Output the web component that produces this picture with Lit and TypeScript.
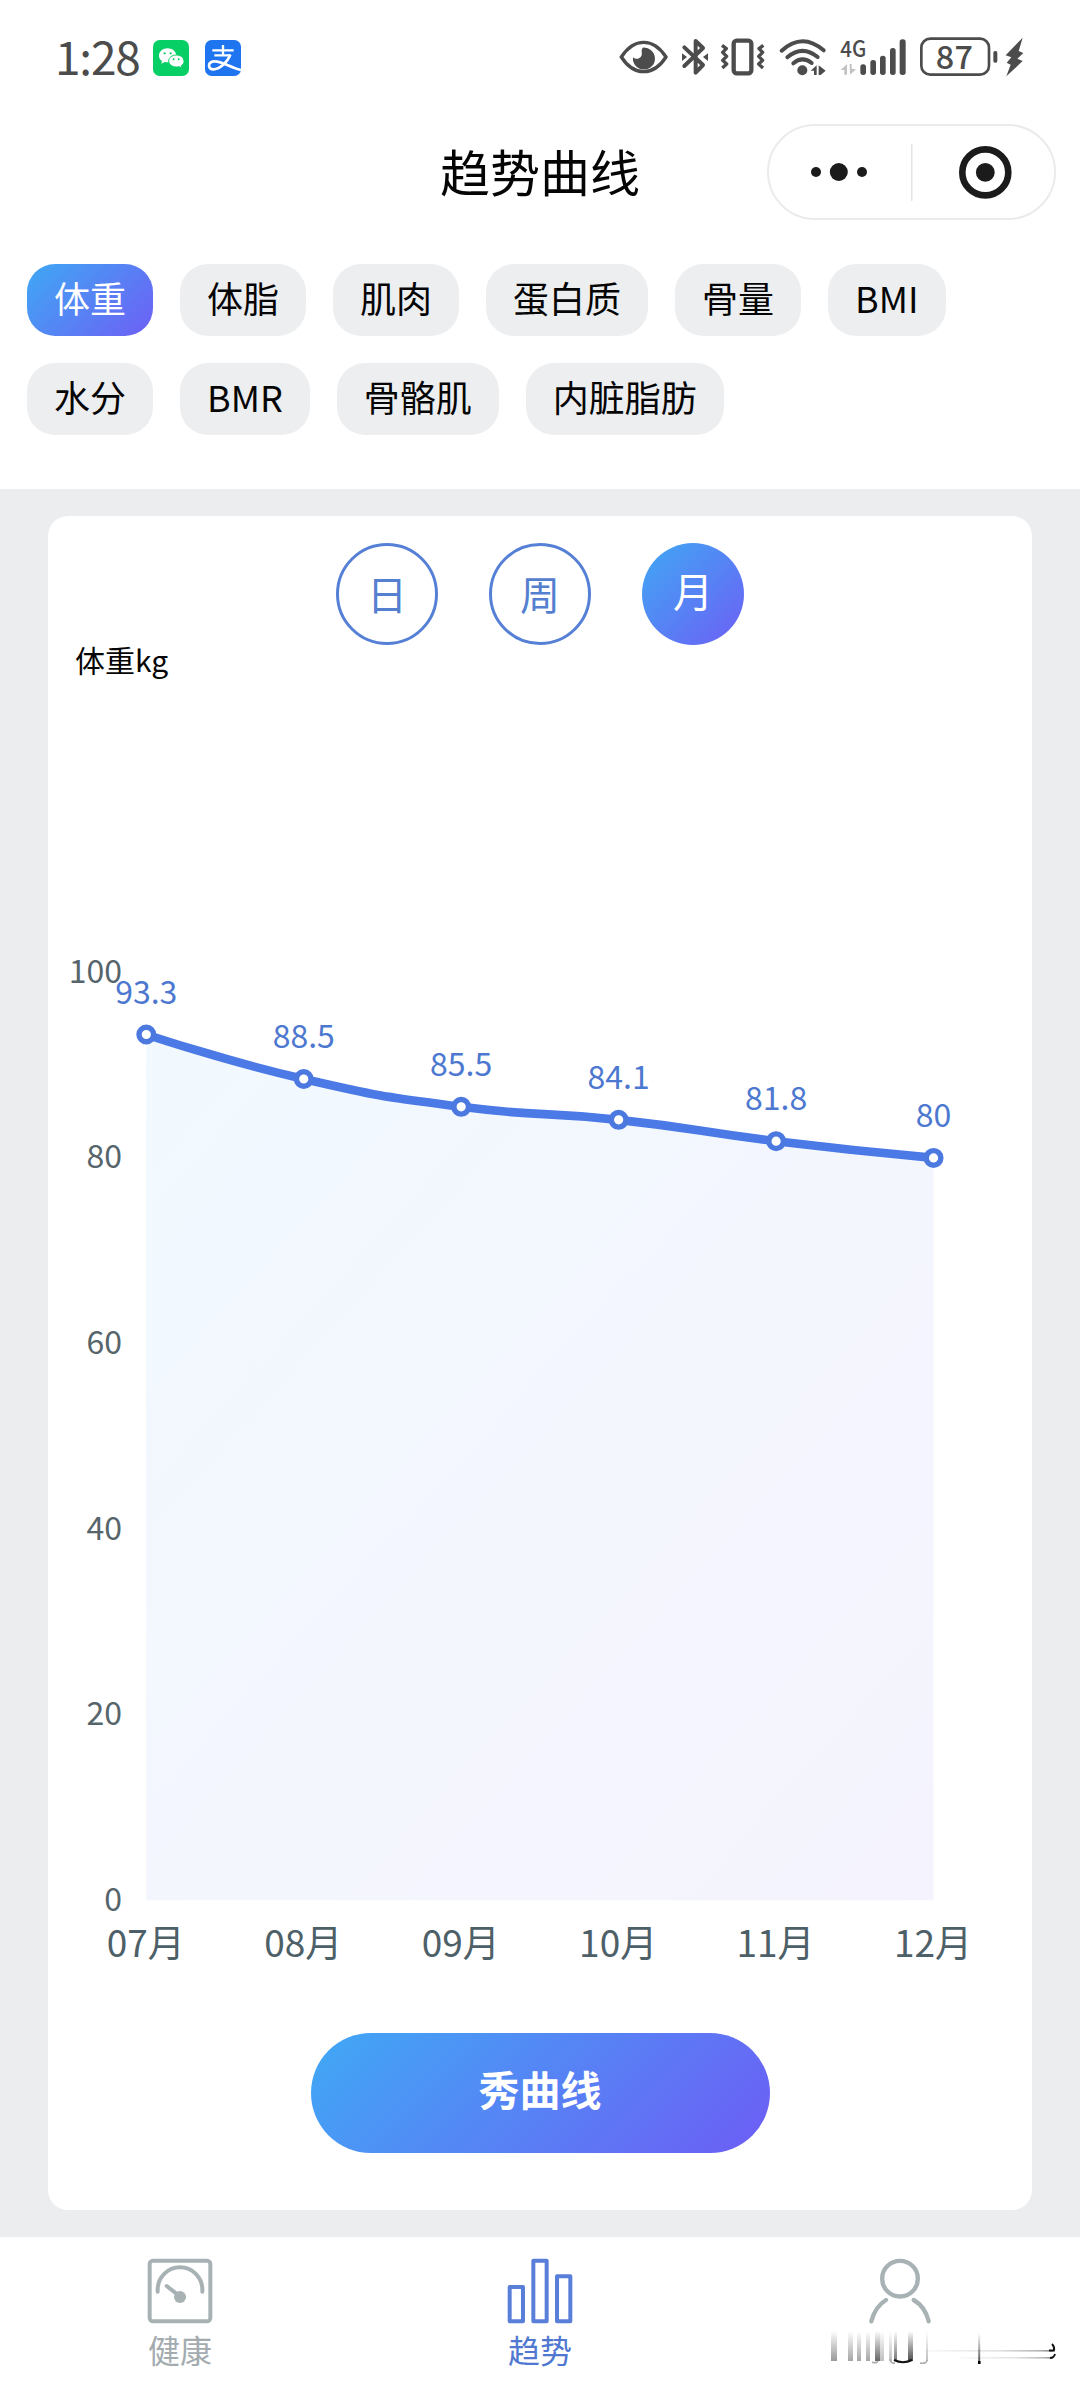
import { LitElement, html, svg, css } from "lit";
import { customElement, property } from "lit/decorators.js";

const FONT = css`"Noto Sans CJK SC", "Noto Sans", sans-serif`;

@customElement("status-bar")
class StatusBar extends LitElement {
  static styles = css`
    :host { display: flex; height: 100px; align-items: flex-start; font-family: ${FONT}; }
    .time { margin: 17px 0 0 55px; width: 98px; font-size: 46px; line-height: 76px; font-weight: 400; color: #4c4c4c; letter-spacing: -1.2px; white-space: nowrap; }
    .app { margin: 40px 16px 0 0; width: 36px; height: 36px; flex: none; }
    .right { margin: 20px 40px 0 auto; }
  `;
  render() {
    return html`
      <div class="time">1:28</div>
      <svg class="app" viewBox="0 0 108 108">
        <rect width="108" height="108" rx="20" fill="#07cf65" />
        <path d="M44 25C29 25 18 35 18 47c0 7 3 12 9 16l-2 8 10-5c3 1 6 1 9 1 14 0 26-9 26-20S59 25 44 25Z" fill="#fff" />
        <path d="M70 45c13 0 23 8 23 19 0 6-3 10-8 13l1 7-8-4c-2 1-5 1-8 1-13 0-23-8-23-18s10-18 23-18Z" fill="#fff" stroke="#07cf65" stroke-width="3" />
        <g fill="#07cf65"><circle cx="35" cy="40" r="3.4" /><circle cx="53" cy="40" r="3.4" /><circle cx="62" cy="58" r="3" /><circle cx="77" cy="58" r="3" /></g>
      </svg>
      <svg class="app" viewBox="0 0 108 108">
        <rect width="108" height="108" rx="20" fill="#1f74f0" />
        <g fill="none" stroke="#fff">
          <path d="M22 31H86M54 15V46M28 46H77" stroke-width="7" />
          <path d="M76 44C68 66 44 88 25 88C8 88 7 66 27 64C50 62 74 82 108 90" stroke-width="8" />
        </g>
      </svg>
      <svg class="right" width="440" height="80" viewBox="0 0 1320 240" fill="#4c4c4c" stroke="none">
        <path d="M64 111C84 80 106 67 131 67S178 80 198 111C178 142 156 155 131 155S84 142 64 111Z" fill="none" stroke="#4c4c4c" stroke-width="10" />
        <path d="M128 83A33 33 0 1 1 99 112Q108 120 118 114Q128 108 125 96Q124 88 128 83Z" />
        <g fill="none" stroke="#4c4c4c" stroke-width="12" stroke-linejoin="round" stroke-linecap="round">
          <path d="M253 82L309 135L287 158V63L309 84L253 138" />
        </g>
        <path d="M246 100L261 111L246 123ZM324 100L309 111L324 123Z" />
        <rect x="401" y="62" width="53" height="98" rx="9" fill="none" stroke="#4c4c4c" stroke-width="13" />
        <path d="M366 76L379 86L368 97L380 109L368 121L380 132L367 144M490 76L477 86L488 97L476 109L488 121L476 132L489 144" fill="none" stroke="#4c4c4c" stroke-width="10" stroke-linejoin="round" />
        <g fill="none" stroke="#4c4c4c" stroke-width="12" stroke-linecap="round">
          <path d="M545 92Q607 36 671 91" /><path d="M562 112Q607 74 653 111" /><path d="M580 130Q607 107 635 129" />
        </g>
        <circle cx="607" cy="151" r="15" />
        <path d="M632 152L650 136V165H642V152ZM656 136L677 152L662 165H656Z" />
        <text x="721" y="110" font-size="68" font-weight="500" textLength="78" lengthAdjust="spacingAndGlyphs">4G</text>
        <path d="M722 150L741 132V164H733V150ZM749 132H755V146L768 148L750 164Z" fill="#c2c2c2" />
        <rect x="781" y="133" width="17" height="32" rx="8" /><rect x="811" y="120" width="17" height="45" rx="8" />
        <rect x="840" y="107" width="17" height="58" rx="8" /><rect x="870" y="84" width="17" height="81" rx="8" />
        <rect x="899" y="58" width="18" height="107" rx="8" />
        <rect x="964" y="56" width="203" height="108" rx="27" fill="none" stroke="#4c4c4c" stroke-width="8" />
        <text x="1007" y="146" font-size="97" font-weight="500" textLength="112">87</text>
        <rect x="1180" y="93" width="12" height="35" rx="5" />
        <path d="M1268 53L1217 106L1234 112L1220 128L1232 134L1219 169L1268 123L1252 116L1270 99L1256 93Z" />
      </svg>`;
  }
}

@customElement("title-bar")
class TitleBar extends LitElement {
  static styles = css`
    :host { display: grid; grid-template-columns: 1fr auto 1fr; height: 164px; align-items: start; font-family: ${FONT}; }
    .title { grid-column: 2; margin-top: 34px; font-size: 50px; line-height: 72px; color: #050505; }
    .capsule { justify-self: end; box-sizing: border-box; width: 289px; height: 96px; margin: 24px 24px 0 0; border: 2px solid #ebebeb; border-radius: 48px; display: flex; }
  `;
  render() {
    return html`
      <div class="title">趋势曲线</div>
      <div class="capsule">
        <svg width="285" height="92" viewBox="769 126 285 92" fill="#1b1b1b">
          <circle cx="816" cy="172" r="5" /><circle cx="838.8" cy="172" r="9" /><circle cx="862" cy="172" r="5" />
          <rect x="911" y="144" width="1.5" height="57" fill="#e4e4e4" />
          <circle cx="985.3" cy="172.4" r="23" fill="none" stroke="#1b1b1b" stroke-width="6.6" /><circle cx="985.3" cy="172.4" r="9.4" />
        </svg>
      </div>`;
  }
}

@customElement("metric-chips")
class MetricChips extends LitElement {
  static styles = css`
    :host { display: flex; flex-direction: column; gap: 27px; padding: 0 27px 54px; font-family: ${FONT}; }
    .row { display: flex; gap: 27px; }
    .chip { height: 72px; line-height: 66px; padding: 0 27px; border-radius: 28px; background: #edeef0; color: #050505; font-size: 36px; white-space: nowrap; }
    .active { color: #fff; background: linear-gradient(135deg, #3fa8f4, #6d5ff5); }
  `;
  rows = [["体重", "体脂", "肌肉", "蛋白质", "骨量", "BMI"], ["水分", "BMR", "骨骼肌", "内脏脂肪"]];
  render() {
    return this.rows.map((row) => html`<div class="row">${row.map((name) => html`
      <div class="chip ${name === "体重" ? "active" : ""}">${name}</div>`)}</div>`);
  }
}

type Point = { month: string; value: number };

@customElement("trend-chart")
class TrendChart extends LitElement {
  static styles = css`
    :host { display: block; font-family: ${FONT}; }
    svg { display: block; }
    .axis { fill: #56656b; font-size: 32px; text-anchor: end; }
    .month { fill: #4d6068; font-size: 37px; text-anchor: middle; }
    .value { fill: #4d78d0; font-size: 32px; text-anchor: middle; }
    .line { fill: none; stroke: #4b79e6; stroke-width: 8.6; }
    .dot { fill: #fff; stroke: #4b79e0; stroke-width: 5.4; }
  `;
  data: Point[] = [
    { month: "07月", value: 93.3 }, { month: "08月", value: 88.5 }, { month: "09月", value: 85.5 },
    { month: "10月", value: 84.1 }, { month: "11月", value: 81.8 }, { month: "12月", value: 80 },
  ];
  // Plot area in page units; the viewBox starts at the card's left edge.
  x = (i: number) => 146.3 + i * 157.45;
  y = (v: number) => 1900.3 - v * 9.28;

  curve() {
    const p = this.data.map((d, i) => [this.x(i), this.y(d.value)]);
    const slope = (i: number) => (p[i + 1][1] - p[i - 1][1]) / (p[i + 1][0] - p[i - 1][0]);
    let d = `M${p[0]}`;
    for (let i = 1; i < p.length; i++) {
      const [x0, y0] = p[i - 1];
      const [x1, y1] = p[i];
      const h = (x1 - x0) / 2;
      const a = i === 1 ? [x0, y0] : [x0 + h, Math.min(y0 + slope(i - 1) * h, y1)];
      const b = i === p.length - 1 ? [x1, y1] : [x1 - h, Math.max(y1 - slope(i) * h, y0)];
      d += `C${a} ${b} ${x1},${y1}`;
    }
    return d;
  }
  render() {
    const line = this.curve();
    return html`<svg width="984" height="1300" viewBox="48 690 984 1300">
      <defs><linearGradient id="area" x1="0" y1="0" x2="1" y2="1">
        <stop offset="0" stop-color="#f1f9ff" /><stop offset="0.55" stop-color="#f4f6fe" /><stop offset="1" stop-color="#f5f4fe" />
      </linearGradient></defs>
      <path d="${line}V1900.3H146.3Z" fill="url(#area)" />
      ${[0, 20, 40, 60, 80, 100].map((v) => svg`<text class="axis" x="122" y=${this.y(v) + 10.5}>${v}</text>`)}
      <path class="line" d=${line} />
      ${this.data.map((d, i) => svg`
        <circle class="dot" cx=${this.x(i)} cy=${this.y(d.value)} r="7.3" />
        <text class="value" x=${this.x(i)} y=${this.y(d.value) - 30.8}>${d.value}</text>
        <text class="month" x=${this.x(i) - 0.5} y="1957">${d.month}</text>`)}
    </svg>`;
  }
}

@customElement("tab-bar")
class TabBar extends LitElement {
  static styles = css`
    :host { display: grid; grid-template-columns: repeat(3, 1fr); height: 151px; background: #fff; font-family: ${FONT}; position: relative; }
    .tab { display: flex; flex-direction: column; align-items: center; padding-top: 21px; color: #a4abaf; }
    .on { color: #5078d0; }
    .label { font-size: 32px; line-height: 44px; margin-top: 3px; }
    .smear { position: absolute; left: 820px; top: 88px; }
  `;
  // x, width and opacity of each vertical streak.
  bars = [
    [831, 6, 0.4], [848, 5, 0.35], [857, 4, 0.35], [866, 4, 0.35], [875, 5, 0.6], [880, 4, 0.25],
    [889, 3, 0.25], [894, 3, 0.55], [908, 5, 0.7], [926, 2, 0.25],
  ];
  render() {
    return html`
      <div class="tab">
        <svg width="66" height="66" viewBox="-1 -1 198 198" fill="none" stroke="#a8b2b5" stroke-width="12" stroke-linecap="round">
          <rect x="7" y="7" width="182" height="182" rx="10" /><path d="M31 100V94A67 67 0 0 1 165 94V100M58 83L91 109" />
          <circle cx="98" cy="116" r="18" fill="#a8b2b5" stroke="none" />
        </svg><span class="label">健康</span>
      </div>
      <div class="tab on">
        <svg width="66" height="66" viewBox="-1 -1 198 198" fill="none" stroke="#5a7fd8" stroke-width="12" stroke-linejoin="round">
          <rect x="7" y="86" width="40" height="103" /><rect x="78" y="7" width="40" height="182" /><rect x="149" y="54" width="40" height="135" />
        </svg><span class="label">趋势</span>
      </div>
      <div class="tab">
        <svg width="66" height="66" viewBox="265 114 198 198" fill="none" stroke="#a8b2b5" stroke-width="13" stroke-linecap="round">
          <circle cx="364" cy="176" r="53.5" /><path d="M278 304Q289 260 322 240M450 304Q440 260 405 240" />
        </svg>
      </div>
      <svg class="smear" width="240" height="50" viewBox="820 2325 240 50">
        <defs>
          <linearGradient id="v" x1="0" y1="0" x2="0" y2="1"><stop offset="0" stop-opacity="0" /><stop offset="1" /></linearGradient>
          <linearGradient id="h"><stop offset="0" stop-opacity="0.05" /><stop offset="0.6" stop-opacity="0.25" /><stop offset="0.9" stop-opacity="0.6" /><stop offset="1" /></linearGradient>
          <filter id="soft" x="-5%" width="110%"><feGaussianBlur stdDeviation="0.7 0.2" /></filter>
        </defs>
        <g filter="url(#soft)">${this.bars.map(([x, w, o]) => svg`<rect x=${x} y="2331" width=${w} height="30" fill="url(#v)" opacity=${o} />`)}</g>
        <path d="M894 2360Q903 2364.500 912 2360" fill="none" stroke="#111" stroke-width="2" />
        <path d="M872 2362Q876 2364 878 2361M890 2359Q891 2364 895 2363M920 2363Q927 2364 927 2360" fill="none" stroke="#aaa" stroke-width="1.6" />
        <rect x="978.200" y="2333" width="2" height="31" fill="url(#v)" opacity="0.7" /><rect x="978" y="2361" width="2.500" height="3" />
        <rect x="925" y="2350" width="128" height="1.6" fill="url(#h)" opacity="0.5" /><rect x="960" y="2357" width="92" height="1.6" fill="url(#h)" opacity="0.45" />
        <path d="M1052 2344Q1055 2347 1054 2350.500H1049M1050 2358Q1054 2358 1055 2354" fill="none" stroke="#111" stroke-width="1.8" />
      </svg>`;
  }
}

@customElement("app-root")
class AppRoot extends LitElement {
  static styles = css`
    :host { display: flex; flex-direction: column; width: 1080px; height: 2388px; overflow: hidden; background: #fff; font-family: ${FONT}; }
    .body { flex: 1; min-height: 0; box-sizing: border-box; padding: 27px 48px; background: #ebedef; display: flex; }
    .card { flex: 1; background: #fff; border-radius: 20px; display: flex; flex-direction: column; align-items: center; }
    .periods { display: flex; gap: 51px; margin-top: 27px; }
    .period { box-sizing: border-box; width: 102px; height: 102px; border: 3px solid #5680d6; border-radius: 50%; text-align: center; font-size: 40px; line-height: 94px; color: #5580d0; }
    .active { border: 0; color: #fff; background: linear-gradient(135deg, #3fa8f4, #6d5ff5); line-height: 94px; }
    .unit { align-self: flex-start; margin-left: 27px; height: 45px; line-height: 29px; font-size: 30px; color: #050505; }
    .show { width: 459px; height: 120px; margin-top: 43px; border-radius: 60px; background: linear-gradient(135deg, #40a9f5, #6d5df5); color: #fff; font-size: 41px; font-weight: 700; line-height: 111px; text-align: center; }
  `;
  @property() period = "月";
  render() {
    return html`
      <status-bar></status-bar>
      <title-bar></title-bar>
      <metric-chips></metric-chips>
      <div class="body"><div class="card">
        <div class="periods">${["日", "周", "月"].map((p) => html`<div class="period ${p === this.period ? "active" : ""}">${p}</div>`)}</div>
        <div class="unit">体重kg</div>
        <trend-chart></trend-chart>
        <div class="show">秀曲线</div>
      </div></div>
      <tab-bar></tab-bar>`;
  }
}
